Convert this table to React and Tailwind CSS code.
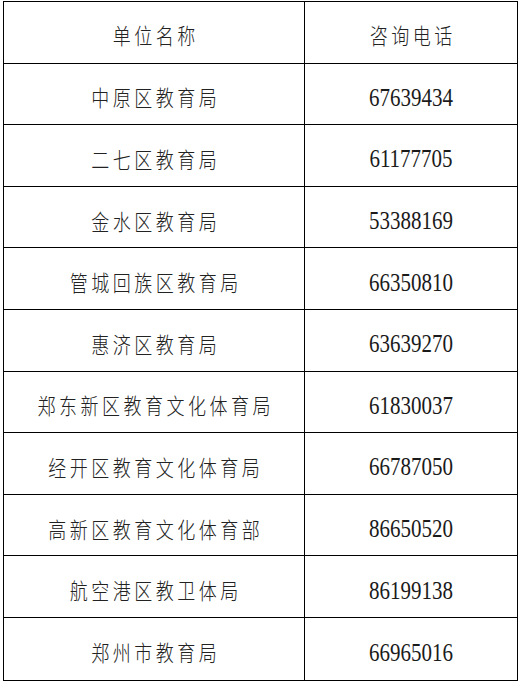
import React from "react";

const rows = [
  ["中原区教育局", "67639434"],
  ["二七区教育局", "61177705"],
  ["金水区教育局", "53388169"],
  ["管城回族区教育局", "66350810"],
  ["惠济区教育局", "63639270"],
  ["郑东新区教育文化体育局", "61830037"],
  ["经开区教育文化体育局", "66787050"],
  ["高新区教育文化体育部", "86650520"],
  ["航空港区教卫体局", "86199138"],
  ["郑州市教育局", "66965016"],
];

const cjk = { fontFamily: '"Noto Sans CJK SC", "Noto Sans", sans-serif' };
const serif = { fontFamily: '"Liberation Serif", "Noto Sans CJK SC", serif' };

function Row({ name, phone, header, last }) {
  return (
    <div
      className={`flex h-[61.6px] ${last ? "" : "border-b-[1.5px] border-black"}`}
    >
      <div
        className={`w-[301px] shrink-0 flex items-center justify-center border-r-[1.5px] border-black ${header ? "pt-[3px]" : "pt-[5px]"}`}
      >
        <span
          className="text-[18px] font-light tracking-[3.5px] pl-[3.5px] text-[#222] scale-y-[1.22] leading-none"
          style={cjk}
        >
          {name}
        </span>
      </div>
      <div
        className={`flex-1 flex items-center justify-center ${header ? "pt-[4px]" : "pt-[9px]"}`}
      >
        {header ? (
          <span
            className="text-[18px] font-light tracking-[3.5px] pl-[3.5px] text-[#222] scale-y-[1.22] leading-none"
            style={cjk}
          >
            {phone}
          </span>
        ) : (
          <span
            className="text-[21px] text-[#1a1a1a] scale-y-[1.2] leading-none"
            style={serif}
          >
            {phone}
          </span>
        )}
      </div>
    </div>
  );
}

export default function App() {
  return (
    <div className="w-[519px] h-[683px] bg-white pl-[3px] pt-[1px]">
      <div className="w-[515px] border-[1.5px] border-black flex flex-col">
        <Row name="单位名称" phone="咨询电话" header />
        {rows.map((r, i) => (
          <Row key={i} name={r[0]} phone={r[1]} last={i === rows.length - 1} />
        ))}
      </div>
    </div>
  );
}
